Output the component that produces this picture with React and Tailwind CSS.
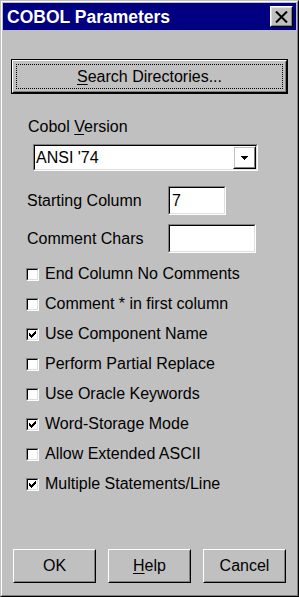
import React from "react";

function Sunken({ className, children }) {
  return (
    <div className={"border border-t-[#808080] border-l-[#808080] border-r-white border-b-white " + className}>
      <div className="h-full w-full border border-t-black border-l-black border-r-[#dfdfdf] border-b-[#dfdfdf] bg-white flex items-center">
        {children}
      </div>
    </div>
  );
}

function Raised({ className, innerClassName, children }) {
  return (
    <div className={"border border-t-white border-l-white border-r-black border-b-black " + className}>
      <div className={"h-full w-full border border-t-[#c0c0c0] border-l-[#c0c0c0] border-r-[#808080] border-b-[#808080] flex items-center justify-center " + (innerClassName || "")}>
        {children}
      </div>
    </div>
  );
}

function Check() {
  const px = [
    [6, 0],
    [5, 1], [6, 1],
    [0, 2], [4, 2], [5, 2], [6, 2],
    [0, 3], [1, 3], [3, 3], [4, 3], [5, 3],
    [0, 4], [1, 4], [2, 4], [3, 4], [4, 4],
    [1, 5], [2, 5], [3, 5],
    [2, 6],
  ];
  return (
    <svg width="7" height="7" viewBox="0 0 7 7" shapeRendering="crispEdges">
      {px.map(([x, y], i) => (
        <rect key={i} x={x} y={y} width="1" height="1" fill="black" />
      ))}
    </svg>
  );
}

function CheckRow({ label, checked }) {
  return (
    <div className="h-[30px] flex items-center pl-[23px]">
      <div className="w-[13px] h-[13px] border border-t-[#808080] border-l-[#808080] border-r-white border-b-white">
        <div className="w-full h-full border border-t-black border-l-black border-r-[#dfdfdf] border-b-[#dfdfdf] bg-white flex items-center justify-center">
          {checked ? <Check /> : null}
        </div>
      </div>
      <span className="ml-[6px] text-[16px] leading-[18px] text-black">{label}</span>
    </div>
  );
}

export default function App() {
  const rows = [
    ["End Column No Comments", false],
    ["Comment * in first column", false],
    ["Use Component Name", true],
    ["Perform Partial Replace", false],
    ["Use Oracle Keywords", false],
    ["Word-Storage Mode", true],
    ["Allow Extended ASCII", false],
    ["Multiple Statements/Line", true],
  ];
  return (
    <div
      className="w-[299px] h-[597px] bg-[#c0c0c0] border border-t-[#c0c0c0] border-l-[#c0c0c0] border-r-black border-b-black text-black"
      style={{ fontFamily: '"Liberation Sans", Arial, sans-serif' }}
    >
      <div className="h-full border border-t-white border-l-white border-r-[#808080] border-b-[#808080] p-px flex flex-col">
        {/* Title bar */}
        <div className="h-[27px] shrink-0 bg-[#000080] flex items-center justify-between pl-[4px] pr-[3px]">
          <span className="text-white font-bold text-[17.5px] leading-[20px]">COBOL Parameters</span>
          <div className="w-[23px] h-[21px] border border-t-white border-l-white border-r-black border-b-black">
            <div className="w-full h-full border border-t-[#dfdfdf] border-l-[#dfdfdf] border-r-[#808080] border-b-[#808080] bg-[#c0c0c0] flex items-center justify-center">
              <svg width="13" height="12" viewBox="0 0 13 12">
                <path d="M1 0.5 L12 11.5 M12 0.5 L1 11.5" stroke="black" strokeWidth="2" fill="none" />
              </svg>
            </div>
          </div>
        </div>

        {/* Search Directories button */}
        <div className="mt-[29px] mx-[8px] h-[35px] border border-black">
          <div className="h-full border border-t-white border-l-white border-r-black border-b-black">
            <div className="h-full border border-t-[#c0c0c0] border-l-[#c0c0c0] border-r-[#808080] border-b-[#808080] p-[2px]">
              <div className="h-full border border-dotted border-black flex items-center justify-center">
                <span className="text-[16px] leading-[18px]">
                  <span className="underline underline-offset-2">S</span>earch Directories...
                </span>
              </div>
            </div>
          </div>
        </div>

        {/* Cobol Version */}
        <div className="mt-[24px] ml-[25px] text-[16px] leading-[17px]">
          Cobol <span className="underline underline-offset-2">V</span>ersion
        </div>
        <Sunken className="mt-[9px] ml-[30px] w-[225px] h-[27px]">
          <span className="flex-1 pl-[1px] text-[16px] leading-[18px]">ANSI '74</span>
          <Raised className="w-[23px] h-full shrink-0">
            <svg width="7" height="4" viewBox="0 0 7 4" shapeRendering="crispEdges">
              <path d="M0 0 H7 L3.5 4 Z" fill="black" />
            </svg>
          </Raised>
        </Sunken>

        {/* Starting Column */}
        <div className="mt-[15px] flex items-center">
          <span className="ml-[24px] w-[141px] text-[16px] leading-[18px]">Starting Column</span>
          <Sunken className="w-[58px] h-[29px]">
            <span className="pl-[2px] text-[16px] leading-[18px]">7</span>
          </Sunken>
        </div>
        <div className="mt-[9px] flex items-center">
          <span className="ml-[24px] w-[141px] text-[16px] leading-[18px]">Comment Chars</span>
          <Sunken className="w-[88px] h-[29px]" />
        </div>

        {/* Checkboxes */}
        <div className="mt-[6px] flex flex-col">
          {rows.map(([l, c]) => (
            <CheckRow key={l} label={l} checked={c} />
          ))}
        </div>

        {/* Bottom buttons */}
        <div className="mt-auto mb-[11px] ml-[10px] flex gap-[12px]">
          <Raised className="w-[83px] h-[34px]">
            <span className="text-[16px] leading-[18px]">OK</span>
          </Raised>
          <Raised className="w-[83px] h-[34px]">
            <span className="text-[16px] leading-[18px]">
              <span className="underline underline-offset-2">H</span>elp
            </span>
          </Raised>
          <Raised className="w-[83px] h-[34px]">
            <span className="text-[16px] leading-[18px]">Cancel</span>
          </Raised>
        </div>
      </div>
    </div>
  );
}
